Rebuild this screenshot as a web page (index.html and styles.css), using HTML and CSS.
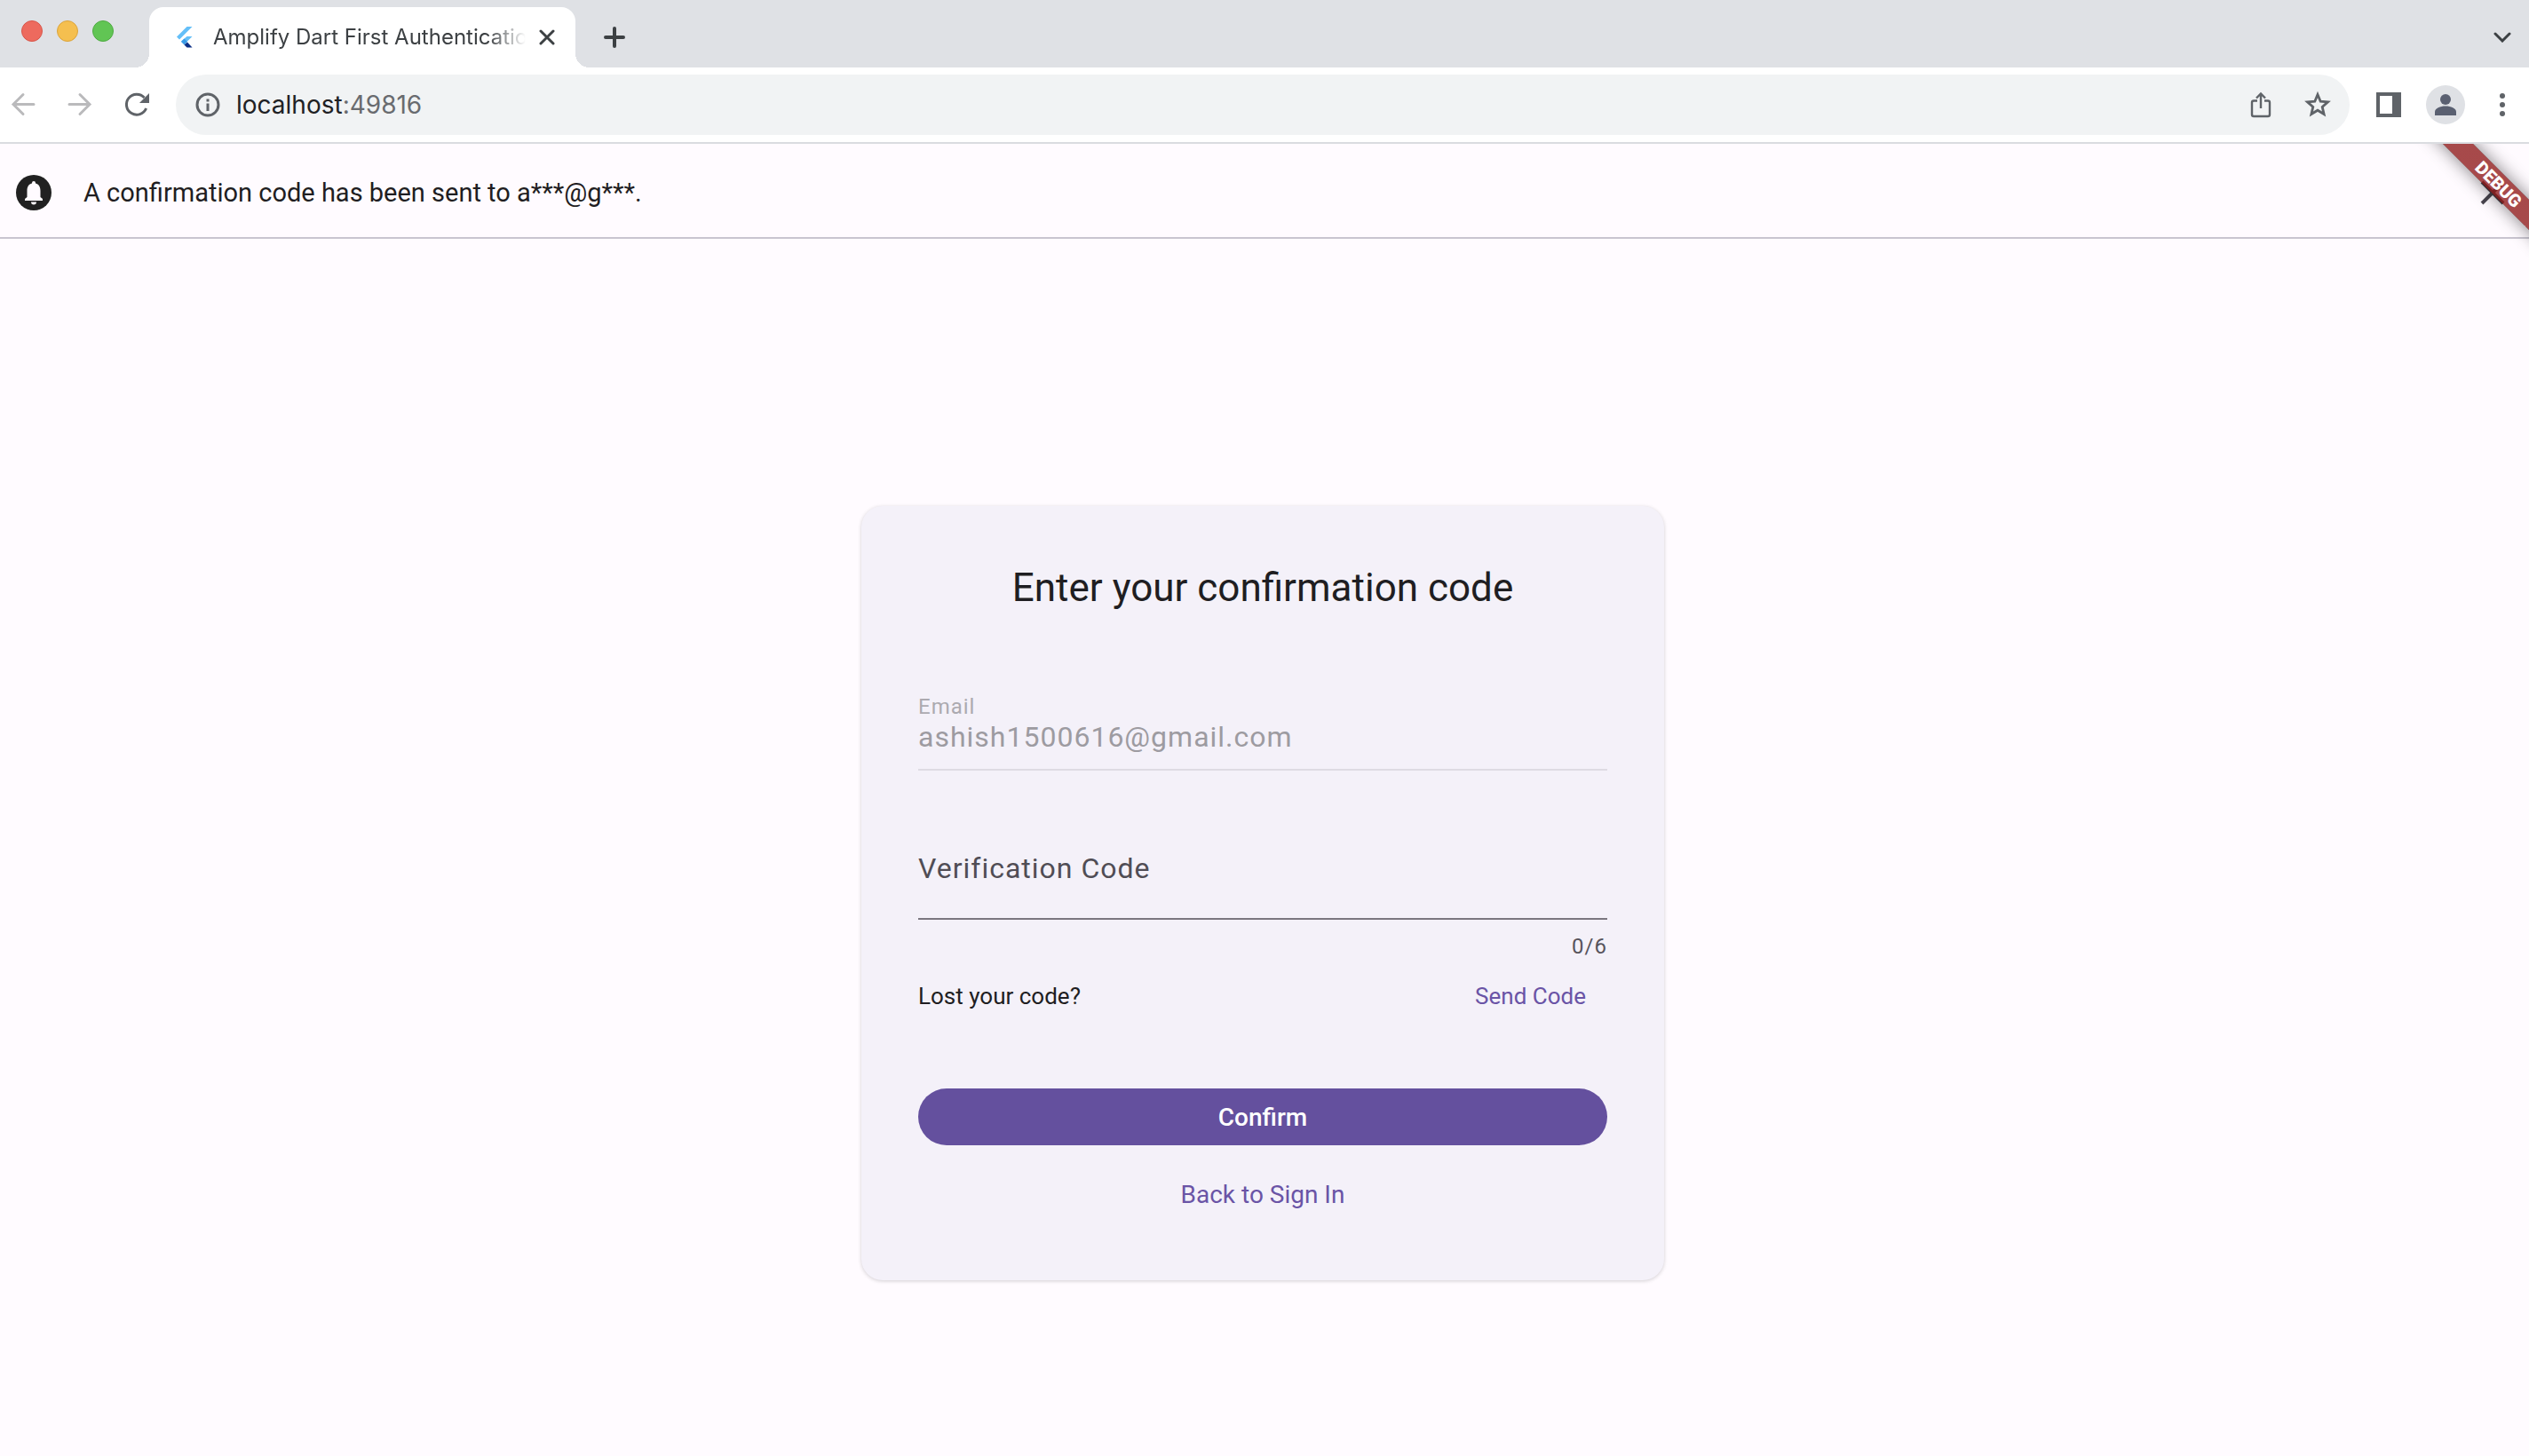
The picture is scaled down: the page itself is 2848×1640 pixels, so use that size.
FILE: index.html
```html
<!DOCTYPE html>
<html lang="en">
<head>
<meta charset="utf-8">
<title>Amplify Dart First Authentication</title>
<link rel="stylesheet" href="styles.css">
</head>
<body>
<header class="browser">
  <div class="tab-strip">
    <div class="lights">
      <button class="light light-close" aria-label="Close window"></button>
      <button class="light light-min" aria-label="Minimize window"></button>
      <button class="light light-max" aria-label="Maximize window"></button>
    </div>
    <div class="tab">
      <svg class="favicon" viewBox="0 0 24 24" aria-hidden="true">
        <path fill="#64bff8" d="M14.500 0H20.500L6 14.500 3 11.500z"/>
        <path fill="#64bff8" d="M14.500 11H20.500L14.500 17 11.500 20 8 16.500z"/>
        <path fill="#3a9be6" d="M8 17l3.500-3.500L15 17l-3.500 3.500z"/>
        <path fill="#0b2f86" d="M11.500 20.500L15 17.500 20.500 23.500H14.500z"/>
      </svg>
      <span class="tab-title">Amplify Dart First Authentication</span>
      <button class="icon-button tab-close" aria-label="Close tab">
        <svg width="18" height="18" viewBox="0 0 18 18"><path d="M2 2l14 14M16 2L2 16" fill="none" stroke="#3c4043" stroke-width="3" stroke-linecap="round"/></svg>
      </button>
    </div>
    <button class="icon-button new-tab" aria-label="New tab">
      <svg width="24" height="24" viewBox="0 0 24 24"><path d="M12 2v20M2 12h20" fill="none" stroke="#3c4043" stroke-width="4" stroke-linecap="round"/></svg>
    </button>
    <button class="icon-button tab-search" aria-label="Search tabs">
      <svg width="20" height="12" viewBox="0 0 20 12"><path d="M2 2l8 8 8-8" fill="none" stroke="#3c4043" stroke-width="3" stroke-linecap="round"/></svg>
    </button>
  </div>
  <div class="toolbar">
    <nav class="nav">
      <button class="icon-button" aria-label="Back"><svg width="28" height="28" viewBox="0 0 28 28"><path d="M26 13.500H3M14 2.500l-11 11 11 11" fill="none" stroke="#bababc" stroke-width="3" stroke-linecap="round"/></svg></button>
      <button class="icon-button" aria-label="Forward"><svg width="28" height="28" viewBox="0 0 28 28"><path d="M2 13.500h23M14 2.500l11 11-11 11" fill="none" stroke="#bababc" stroke-width="3" stroke-linecap="round"/></svg></button>
      <button class="icon-button" aria-label="Reload"><svg width="28" height="28" viewBox="0 0 28 28"><path d="M24.600 18A11.500 11.500 0 1 1 22.500 6" fill="none" stroke="#5f6368" stroke-width="3"/><path d="M28 1v11H17z" fill="#5f6368"/></svg></button>
    </nav>
    <div class="omnibox">
      <button class="icon-button" aria-label="Site information"><svg width="28" height="28" viewBox="0 0 28 28"><circle cx="14" cy="14" r="12" fill="none" stroke="#5f6368" stroke-width="3"/><path d="M12.500 12.500h3V21h-3zM12.500 7.500h3v3h-3z" fill="#5f6368"/></svg></button>
      <div class="url" role="textbox" aria-label="Address"><span class="host">localhost</span>:49816</div>
      <button class="icon-button" aria-label="Share"><svg width="32" height="32" viewBox="0 0 32 32"><path d="M12 11.500H8q-2 0-2 2V27q0 2 2 2h16q2 0 2-2V13.500q0-2-2-2h-4M16 20V4M11 8.500L16 3.500l5 5" fill="none" stroke="#5f6368" stroke-width="2.400"/></svg></button>
      <button class="icon-button" aria-label="Bookmark"><svg width="32" height="32" viewBox="0 0 32 32"><path d="M16 4.500l3.200 7.700 8.300.7-6.300 5.500 1.900 8.100-7.100-4.300-7.100 4.300 1.900-8.100-6.300-5.500 8.300-.7z" fill="none" stroke="#5f6368" stroke-width="2.800"/></svg></button>
    </div>
    <div class="actions">
      <button class="icon-button" aria-label="Side panel"><svg width="28" height="28" viewBox="0 0 28 28"><path fill="#5f6368" fill-rule="evenodd" d="M0 0h28v28H0zM4 4v20h14V4z"/></svg></button>
      <button class="icon-button avatar" aria-label="Profile"><svg width="24" height="24" viewBox="0 0 24 24"><circle cx="12" cy="6" r="6" fill="#5a6071"/><path d="M0 24v-4c0-4 6-6.500 12-6.500s12 2.500 12 6.500v4z" fill="#5a6071"/></svg></button>
      <button class="icon-button menu" aria-label="Menu"><svg width="6" height="26" viewBox="0 0 6 26"><g fill="#5f6368"><circle cx="3" cy="3" r="3"/><circle cx="3" cy="13" r="3"/><circle cx="3" cy="23" r="3"/></g></svg></button>
    </div>
  </div>
</header>
<main class="app">
  <div class="banner" role="status">
    <svg width="40" height="40" viewBox="0 0 40 40" aria-hidden="true"><circle cx="20" cy="20" r="20" fill="#212121"/><path d="M10 29v-2l2.500-2v-7c0-5 2-7.500 5.500-8.500V9a2 2 0 0 1 4 0v.5c3.500 1 5.500 3.500 5.500 8.500v7l2.500 2v2zM17 30.500h6a3 3 0 0 1-6 0z" fill="#fffbff"/></svg>
    <p class="banner-text">A confirmation code has been sent to a***@g***.</p>
    <button class="icon-button" aria-label="Dismiss"><svg width="28" height="28" viewBox="0 0 28 28"><path d="M2 2l24 24M26 2L2 26" fill="none" stroke="#48454e" stroke-width="4"/></svg></button>
  </div>
  <div class="debug"><span class="debug-ribbon">DEBUG</span></div>
  <div class="stage">
    <form class="card">
      <h1 class="title">Enter your confirmation code</h1>
      <div class="field field-email">
        <label class="label-small" for="email">Email</label>
        <input class="input" id="email" type="email" value="ashish1500616@gmail.com" disabled>
      </div>
      <div class="field field-code">
        <input class="input" id="code" type="text" maxlength="6" placeholder="Verification Code" aria-label="Verification Code">
      </div>
      <div class="counter">0/6</div>
      <div class="resend">
        <span>Lost your code?</span>
        <button class="text-button send" type="button">Send Code</button>
      </div>
      <button class="confirm" type="submit">Confirm</button>
      <button class="text-button back" type="button">Back to Sign In</button>
    </form>
  </div>
</main>
</body>
</html>
```
FILE: styles.css
```css
* {
  box-sizing: border-box;
}

body {
  margin: 0;
  min-height: 100vh;
  display: flex;
  flex-direction: column;
  font-family: Roboto, sans-serif;
  color: #1f1e22;
  background: #fffbff;
}

button,
input {
  margin: 0;
  padding: 0;
  border: 0;
  background: none;
  color: inherit;
  font: inherit;
}

svg {
  display: block;
  flex: none;
}

.icon-button {
  display: flex;
  flex: none;
  align-items: center;
  justify-content: center;
}

/* Browser chrome */

.browser {
  font-family: Inter, sans-serif;
}

.tab-strip {
  display: flex;
  align-items: flex-end;
  height: 76px;
  padding: 0 20px 0 24px;
  background: #dfe1e5;
}

.lights {
  display: flex;
  gap: 16px;
  width: 144px;
  padding-bottom: 29px;
}

.light {
  width: 24px;
  height: 24px;
  border: 1px solid;
  border-radius: 50%;
}

.light-close {
  background: #ed6a5e;
  border-color: #d8564a;
}

.light-min {
  background: #f5bf4f;
  border-color: #dba43c;
}

.light-max {
  background: #61c554;
  border-color: #50ab43;
}

.tab {
  position: relative;
  display: flex;
  align-items: center;
  width: 480px;
  height: 68px;
  padding: 0 23px 0 28px;
  border-radius: 16px 16px 0 0;
  background: #fff;
}

.tab::before,
.tab::after {
  content: "";
  position: absolute;
  bottom: 0;
  width: 16px;
  height: 16px;
}

.tab::before {
  right: 100%;
  background: radial-gradient(circle at 0 0, transparent 16px, #fff 16px);
}

.tab::after {
  left: 100%;
  background: radial-gradient(circle at 100% 0, transparent 16px, #fff 16px);
}

.favicon {
  width: 24px;
  height: 24px;
}

.tab-title {
  flex: 1;
  margin: 0 15px 0 20px;
  overflow: hidden;
  white-space: nowrap;
  font-size: 24px;
  line-height: 32px;
  color: #3c4043;
  mask-image: linear-gradient(to right, #000 88%, transparent);
}

.new-tab {
  width: 48px;
  height: 68px;
  margin-left: 20px;
}

.tab-search {
  height: 68px;
  margin-left: auto;
}

.toolbar {
  display: flex;
  align-items: center;
  gap: 30px;
  height: 86px;
  padding: 0 16px 0 12px;
  border-bottom: 2px solid #dadce0;
  background: #fff;
}

.nav {
  display: flex;
  gap: 36px;
}

.omnibox {
  display: flex;
  flex: 1;
  align-items: center;
  gap: 32px;
  height: 68px;
  padding: 0 20px 0 22px;
  border-radius: 34px;
  background: #f1f3f4;
}

.url {
  flex: 1;
  margin-left: -14px;
  font-size: 28px;
  line-height: 40px;
  color: #696b6f;
}

.host {
  color: #202124;
}

.actions {
  display: flex;
  align-items: center;
  gap: 28px;
}

.avatar {
  width: 44px;
  height: 44px;
  border-radius: 50%;
  background: #dfe1e5;
}

.menu {
  width: 28px;
}

/* App */

.app {
  position: relative;
  display: flex;
  flex: 1;
  flex-direction: column;
  overflow: hidden;
}

.banner {
  display: flex;
  align-items: center;
  gap: 36px;
  height: 107px;
  padding: 4px 27px 0 18px;
  border-bottom: 2px solid #c9c5d0;
}

.banner-text {
  flex: 1;
  margin: 0;
  font-size: 29px;
  line-height: 40px;
}

.debug {
  position: absolute;
  top: 0;
  right: 0;
  width: 160px;
  height: 160px;
  overflow: hidden;
}

.debug-ribbon {
  position: absolute;
  top: 28px;
  right: -80px;
  width: 240px;
  padding-left: 16px;
  background: linear-gradient(#b71c1c98, #b71c1c98), #00000070;
  box-shadow: 0 0 20px #0000007f;
  color: #fff;
  font-size: 20px;
  font-weight: 900;
  line-height: 24px;
  text-align: center;
  transform: rotate(45deg);
}

.stage {
  display: flex;
  flex: 1;
  align-items: center;
  justify-content: center;
  padding: 103px 4px 0 0;
}

.card {
  display: flex;
  flex-direction: column;
  width: 904px;
  max-width: 100%;
  padding: 64px;
  border-radius: 24px;
  background: #f4f1f9;
  box-shadow: 0 1px 4px #0000002e;
}

.title {
  margin: 0;
  font-size: 44px;
  font-weight: 400;
  line-height: 56px;
  text-align: center;
}

.field {
  display: flex;
  flex-direction: column;
}

.input {
  width: 100%;
  font-size: 32px;
  line-height: 40px;
  letter-spacing: 1px;
  outline: 0;
}

.field-email {
  margin-top: 92px;
  padding-bottom: 16px;
  border-bottom: 2px solid #dedbe3;
  color: #9d9ba1;
}

.label-small,
.counter {
  font-size: 24px;
  line-height: 28px;
  letter-spacing: 1px;
}

.label-small {
  color: #acaab0;
}

.field-code {
  margin-top: 90px;
  padding-bottom: 36px;
  border-bottom: 2px solid #7a767f;
}

.field-code .input::placeholder {
  color: #504d55;
  opacity: 1;
}

.counter {
  margin-top: 16px;
  text-align: right;
  color: #57545c;
}

.resend {
  display: flex;
  align-items: center;
  justify-content: space-between;
  margin-top: 22px;
  padding-right: 24px;
  font-size: 26px;
  line-height: 40px;
}

.text-button {
  color: #6a54a6;
}

.confirm {
  height: 64px;
  margin-top: 84px;
  border-radius: 32px;
  background: #64509e;
  color: #fff;
  font-size: 28px;
  font-weight: 500;
}

.back {
  align-self: center;
  margin-top: 36px;
  margin-bottom: 12px;
  font-size: 28px;
  line-height: 40px;
}
```
